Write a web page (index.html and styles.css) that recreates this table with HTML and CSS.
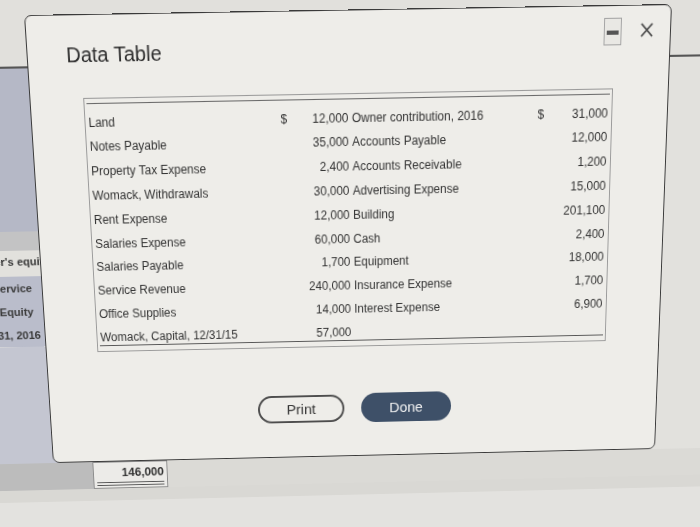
FILE: index.html
```html
<!DOCTYPE html>
<html lang="en">
<head>
<meta charset="utf-8">
<title>Data Table</title>
<link rel="stylesheet" href="styles.css">
</head>
<body>
<div class="screen">
  <div class="sheet">
    <div class="sheet-top"></div>
    <div class="sheet-rule"></div>
    <div class="side side-blue"></div>
    <div class="side side-gray"></div>
    <div class="side side-light"><span>Womack, owner's equity</span></div>
    <div class="side side-row side-service"><span>Service</span></div>
    <div class="side side-row side-equity"><span>Total Equity</span></div>
    <div class="side side-row side-date"><span>December 31, 2016</span></div>
    <div class="side side-low"></div>
    <div class="total-row">
      <div class="total-lead"></div>
      <div class="total-cell">
        <div class="total-num">146,000</div>
        <div class="dbl"></div>
      </div>
    </div>
    <div class="foot1"></div>
    <div class="foot2"></div>
  </div>

  <div class="dialog">
    <div class="dlg-head">
      <h1 class="dlg-title">Data Table</h1>
      <div class="dlg-controls">
        <span class="ctl-min"><span class="ctl-min-bar"></span></span>
        <svg class="ctl-close" viewBox="0 0 13 14" width="13" height="14"><path d="M1 1L12 13M12 1L1 13" stroke="#4a4a4a" stroke-width="1.8" fill="none"/></svg>
      </div>
    </div>
    <div class="data-box">
      <div class="data-rule">
        <table class="data">
          <colgroup>
            <col class="c1"><col class="c2"><col class="c3"><col class="c4">
          </colgroup>
          <tr><td class="lbl">Land</td><td class="amt"><span class="cur">$</span>12,000</td><td class="lbl2">Owner contribution, 2016</td><td class="amt amt4"><span class="cur">$</span>31,000</td></tr>
          <tr><td class="lbl">Notes Payable</td><td class="amt">35,000</td><td class="lbl2">Accounts Payable</td><td class="amt amt4">12,000</td></tr>
          <tr><td class="lbl">Property Tax Expense</td><td class="amt">2,400</td><td class="lbl2">Accounts Receivable</td><td class="amt amt4">1,200</td></tr>
          <tr><td class="lbl">Womack, Withdrawals</td><td class="amt">30,000</td><td class="lbl2">Advertising Expense</td><td class="amt amt4">15,000</td></tr>
          <tr><td class="lbl">Rent Expense</td><td class="amt">12,000</td><td class="lbl2">Building</td><td class="amt amt4">201,100</td></tr>
          <tr><td class="lbl">Salaries Expense</td><td class="amt">60,000</td><td class="lbl2">Cash</td><td class="amt amt4">2,400</td></tr>
          <tr><td class="lbl">Salaries Payable</td><td class="amt">1,700</td><td class="lbl2">Equipment</td><td class="amt amt4">18,000</td></tr>
          <tr><td class="lbl">Service Revenue</td><td class="amt">240,000</td><td class="lbl2">Insurance Expense</td><td class="amt amt4">1,700</td></tr>
          <tr><td class="lbl">Office Supplies</td><td class="amt">14,000</td><td class="lbl2">Interest Expense</td><td class="amt amt4">6,900</td></tr>
          <tr class="last"><td class="lbl">Womack, Capital, 12/31/15</td><td class="amt">57,000</td><td class="lbl2"></td><td class="amt amt4"></td></tr>
        </table>
      </div>
    </div>
    <div class="dlg-actions">
      <button class="btn btn-print" type="button">Print</button>
      <button class="btn btn-done" type="button">Done</button>
    </div>
  </div>
</div>
</body>
</html>
```

FILE: styles.css
```css
* { box-sizing: border-box; }

html, body {
  margin: 0;
  padding: 0;
  width: 700px;
  height: 527px;
  overflow: hidden;
  background: #e2e1dd;
  font-family: "Liberation Sans", Arial, Helvetica, sans-serif;
  color: #333;
}

/* The photographed screen: a flat layout seen in perspective */
.screen {
  position: absolute;
  left: 0;
  top: 0;
  width: 760px;
  height: 580px;
  transform-origin: 0 0;
  transform: matrix3d(1.009492, -0.016918, 0, 0.0000141265,
                      0.073804, 1.079239, 0, 0.000171141,
                      0, 0, 1, 0,
                      -1.33486, -0.78254, 0, 0.997094);
}

/* background worksheet */
.sheet {
  margin-left: -50px;
  width: 810px;
  display: flex;
  flex-direction: column;
}
.sheet-top { height: 63px; background: #e1e0dc; }
.sheet-rule { height: 1.5px; background: #555; }

.side {
  width: 80px;
  font-size: 11.5px;
  font-weight: bold;
  color: #3a3a3a;
  display: flex;
  justify-content: flex-end;
  white-space: nowrap;
  overflow: hidden;
}
.side span { flex: none; }
.side-blue { height: 158.5px; background: #b5b8c6; }
.side-gray { height: 19px; background: #c3c3c4; }
.side-light { height: 26px; line-height: 22px; background: #e2e1dd; }
.side-light span { margin-right: -4px; }
.side-row { height: 24px; line-height: 24px; background: #babdcb; }
.side-service { padding-right: 16px; }
.side-equity { padding-right: 16px; }
.side-date { padding-right: 10px; }
.side-low { height: 123px; background: #c4c6d1; }

.total-row {
  height: 29px;
  display: flex;
  background: #dbdad6;
}
.total-lead { width: 116px; background: #bcbcbc; }
.total-cell {
  width: 80px;
  border: 1px solid #8c8c8c;
  background: #ecebe8;
  padding: 4px 3px 0 3px;
}
.total-num {
  font-size: 12.5px;
  font-weight: bold;
  line-height: 14px;
  text-align: right;
  color: #333;
}
.dbl {
  margin-top: 3px;
  height: 4px;
  border-top: 1.5px solid #555;
  border-bottom: 1.5px solid #555;
}
.foot1 { height: 13px; background: #d9d8d4; }
.foot2 { height: 80px; background: #e3e2df; }

/* dialog */
.dialog {
  position: absolute;
  left: 24px;
  top: 15px;
  width: 648px;
  height: 448px;
  border: 1.5px solid #3a3a3a;
  border-radius: 7px;
  background: #eeede9;
}

.dlg-head {
  display: flex;
  justify-content: space-between;
  align-items: flex-start;
  padding: 11px 15.5px 0 38.5px;
}
.dlg-title {
  margin: 13.5px 0 0;
  font-size: 20px;
  line-height: 24px;
  font-weight: normal;
  color: #2e2e2e;
}
.dlg-controls {
  display: flex;
  align-items: flex-start;
  gap: 19px;
}
.ctl-min {
  width: 18px;
  height: 26px;
  border: 1px solid #a5a5a5;
  background: #e9e8e4;
  display: flex;
  align-items: center;
  justify-content: center;
}
.ctl-min-bar {
  width: 12px;
  height: 4.5px;
  background: #555;
  margin-top: 2px;
}
.ctl-close {
  display: block;
  margin-top: 4.5px;
  margin-right: 2px;
}

.data-box {
  margin: 29px 0 0 52.5px;
  width: 537px;
  height: 253px;
  border: 1px solid #9b9b9b;
  padding: 4.35px 2px 0;
}
.data-rule {
  border-top: 1px solid #6a6a6a;
  border-bottom: 1px solid #575757;
  padding-top: 2.5px;
}
.data {
  width: 531px;
  table-layout: fixed;
  border-collapse: separate;
  border-spacing: 0;
  font-size: 12px;
  color: #333;
}
.c1 { width: 196px; }
.c2 { width: 69px; }
.c3 { width: 193px; }
.c4 { width: 73px; }
.data td {
  padding: 8.3px 0 0;
  line-height: 15.5px;
  height: 23.8px;
  white-space: nowrap;
  vertical-align: top;
}
.data tr.last td { height: 21.3px; }
.data td.lbl { padding-left: 1.5px; }
.data td.lbl2 { padding-left: 3.5px; }
.data td.amt { text-align: right; }
.data td.amt4 { padding-right: 1px; }
.cur { float: left; }

.dlg-actions {
  margin-top: 48.5px;
  display: flex;
  justify-content: center;
  align-items: center;
  gap: 18px;
  height: 32px;
}
.btn {
  font-family: "Liberation Sans", Arial, Helvetica, sans-serif;
  font-size: 15px;
  padding: 0;
  cursor: pointer;
}
.btn-print {
  width: 92px;
  height: 29px;
  border: 2px solid #4d4d4d;
  border-radius: 15px;
  background: transparent;
  color: #333;
}
.btn-done {
  width: 96px;
  height: 31px;
  border: none;
  border-radius: 16px;
  background: #3e5068;
  color: #f3f3f3;
}
```
